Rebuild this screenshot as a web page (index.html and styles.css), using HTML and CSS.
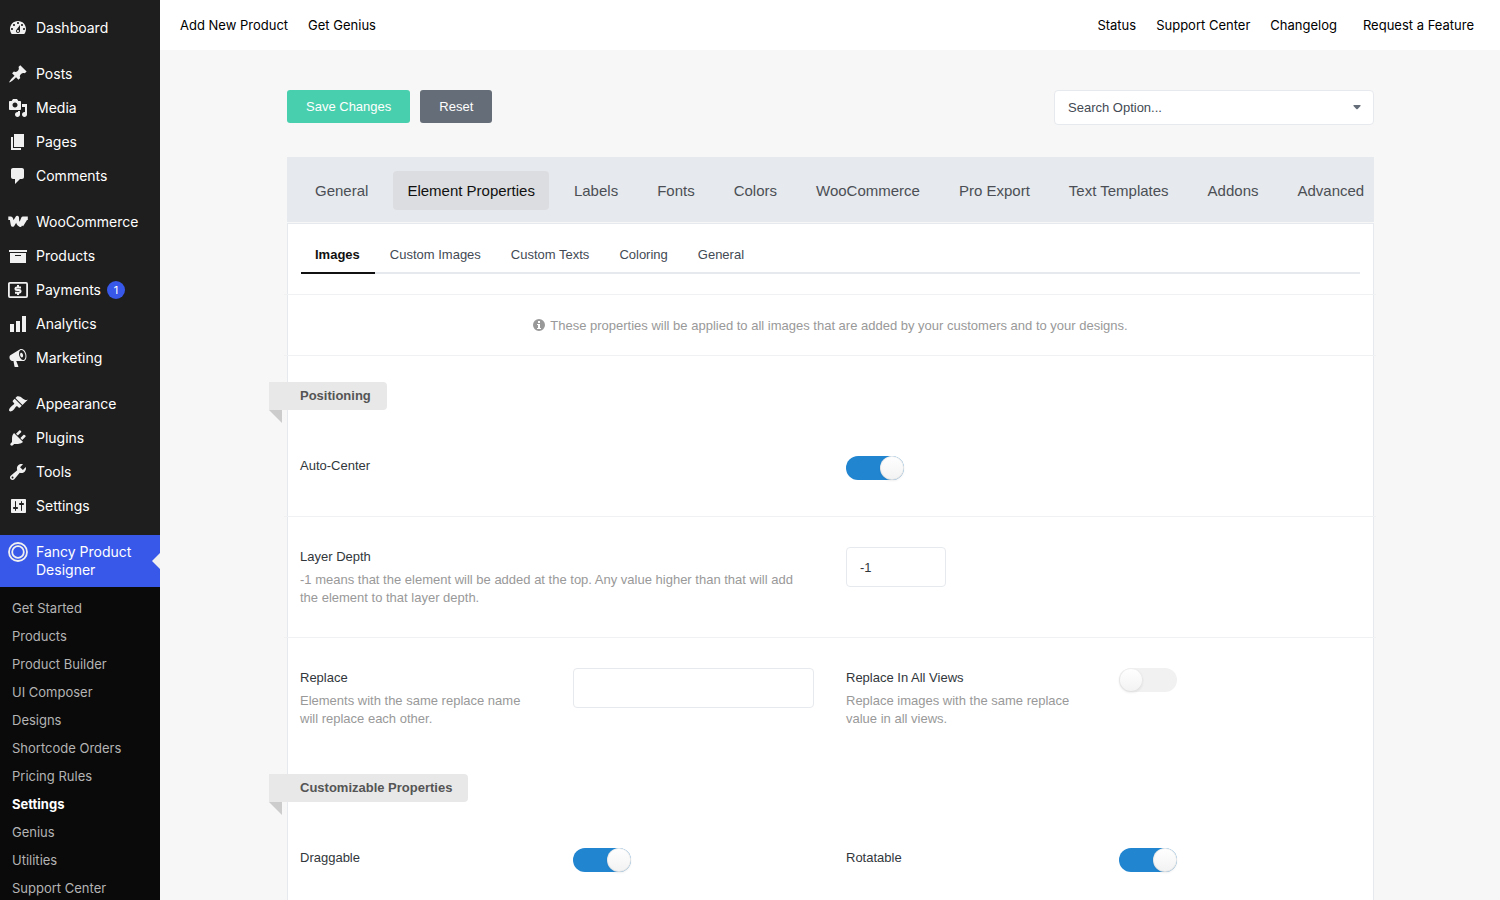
FILE: index.html
```html
<!DOCTYPE html>
<html lang="en">

<head>
    <meta charset="utf-8">
    <title>Fancy Product Designer - Settings</title>
    <link rel="stylesheet" href="styles.css">
</head>

<body>
    <div class="app">
        <nav class="sidebar" aria-label="Main menu">
            <ul class="menu">
                <li><a href="#"><svg viewBox="0 0 20 20"><path fill-rule="evenodd" d="M3.76 16h12.48c1.1-1.37 1.76-3.11 1.76-5 0-4.42-3.58-8-8-8s-8 3.58-8 8c0 1.89.66 3.63 1.76 5zM10 4c.55 0 1 .45 1 1s-.45 1-1 1-1-.45-1-1 .45-1 1-1zM6 6c.55 0 1 .45 1 1s-.45 1-1 1-1-.45-1-1 .45-1 1-1zm8 0c.55 0 1 .45 1 1s-.45 1-1 1-1-.45-1-1 .45-1 1-1zm-5.37 5.55L12 7v6c0 1.1-.9 2-2 2s-2-.9-2-2c0-.57.24-1.08.63-1.45zM4 10c.55 0 1 .45 1 1s-.45 1-1 1-1-.45-1-1 .45-1 1-1zm12 0c.55 0 1 .45 1 1s-.45 1-1 1-1-.45-1-1 .45-1 1-1zm-5 3c0-.55-.45-1-1-1s-1 .45-1 1 .45 1 1 1 1-.45 1-1z"/></svg>Dashboard</a></li>
                <li class="group-start"><a href="#"><svg viewBox="0 0 20 20"><path d="M10.44 3.02l1.82-1.82 6.36 6.35-1.83 1.82c-1.05-.68-2.48-.57-3.41.36l-.75.75c-.92.93-1.04 2.35-.35 3.41l-1.83 1.82-2.41-2.41-2.8 2.79c-.42.42-3.38 2.71-3.8 2.29s1.86-3.39 2.28-3.81l2.79-2.79L4.1 9.36l1.83-1.82c1.05.69 2.48.57 3.4-.36l.75-.75c.93-.92 1.05-2.35.36-3.41z"/></svg>Posts</a></li>
                <li><a href="#"><svg viewBox="0 0 20 20"><path fill-rule="evenodd" d="M13 11V4c0-.55-.45-1-1-1h-1.67L9 1H5L3.67 3H2c-.55 0-1 .45-1 1v7c0 .55.45 1 1 1h10c.55 0 1-.45 1-1zM7 4.5c1.38 0 2.5 1.12 2.5 2.5S8.38 9.5 7 9.5 4.5 8.38 4.5 7 5.62 4.5 7 4.5zM14 6h5v10.5c0 1.38-1.12 2.5-2.5 2.5S14 17.88 14 16.5s1.12-2.5 2.5-2.5c.17 0 .34.02.5.05V9h-3V6zm-4 8.05V13h2v3.5c0 1.38-1.12 2.5-2.5 2.5S7 17.88 7 16.5 8.12 14 9.5 14c.17 0 .34.02.5.05z"/></svg>Media</a></li>
                <li><a href="#"><svg viewBox="0 0 20 20"><path d="M6 15V2h10v13H6zm-1 1h8v2H3V5h2v11z"/></svg>Pages</a></li>
                <li><a href="#"><svg viewBox="0 0 20 20"><path d="M5 2h9c1.1 0 2 .9 2 2v7c0 1.1-.9 2-2 2h-2l-5 5v-5H5c-1.1 0-2-.9-2-2V4c0-1.1.9-2 2-2z"/></svg>Comments</a></li>
                <li class="group-start"><a href="#"><svg viewBox="0 0 20 20"><path class="stroke" stroke-width="3.6" stroke-linejoin="round" d="M.3 6.2H2.600C4 6.200 3.600 9 4.700 13L9.200 5.600C9.200 9 10 12.200 12.200 13.200L15 6.200H19.800M17.900 6.200L13.600 13.200"/></svg>WooCommerce</a></li>
                <li><a href="#"><svg viewBox="0 0 20 20"><path fill-rule="evenodd" d="M19 4v2H1V4h18zM2 7h16v10H2V7zm11 3V9H7v1h6z"/></svg>Products</a></li>
                <li><a href="#"><svg viewBox="0 0 20 20"><rect class="stroke" stroke-width="1.8" x=".9" y="2.9" width="18.2" height="14.2" rx="1"/><path class="stroke" stroke-width="2" d="M13 7.400H8.900c-2 0-2 2.600 0 2.600h2.200c2 0 2 2.700 0 2.700H7M10 5v1.600M10 13v2"/></svg>Payments<span class="badge">1</span></a></li>
                <li><a href="#"><svg viewBox="0 0 20 20"><path d="M18 18V2h-4v16h4zm-6 0V7H8v11h4zm-6 0v-8H2v8h4z"/></svg>Analytics</a></li>
                <li><a href="#"><svg viewBox="0 0 20 20"><path fill-rule="evenodd" d="M18.150 5.940c.46 1.620.38 3.220-.02 4.480-.42 1.280-1.260 2.180-2.300 2.480-.16.06-.26.06-.4.06-.06.02-.12.02-.18.02-.06.02-.14.02-.22.02h-6.800l2.220 5.500c.02.14-.06.26-.14.34-.08.1-.24.16-.34.16H6.950c-.1 0-.26-.06-.34-.16-.08-.08-.16-.2-.14-.34l-1-5.500H4.250l-.02-.02c-.5.06-1.080-.18-1.540-.62s-.88-1.080-1.060-1.880c-.24-.8-.2-1.560-.02-2.200.18-.62.58-1.080 1.060-1.300l.02-.02 9-5.400c.1-.06.18-.1.24-.16.06-.04.14-.08.24-.12.16-.08.28-.12.5-.18 1.040-.3 2.240.1 3.220.98s1.840 2.240 2.260 3.860zm-2.580 5.980h-.02c.4-.1.74-.34 1.040-.7.58-.7.86-1.760.86-3.040 0-.64-.1-1.300-.28-1.980-.34-1.360-1.020-2.500-1.780-3.240s-1.680-1.100-2.460-.88c-.82.22-1.400.96-1.700 2-.32 1.040-.28 2.360.06 3.720.38 1.360 1 2.500 1.800 3.240.78.74 1.620 1.100 2.480.88zm-2.540-7.080c.22-.04.42-.02.62.04.38.16.76.48 1.020 1s.42 1.200.42 1.780c0 .3-.04.56-.12.8-.18.48-.44.84-.86.94-.34.1-.8-.06-1.140-.4s-.64-.86-.78-1.500c-.18-.62-.12-1.240.02-1.720s.48-.84.82-.94z"/></svg>Marketing</a></li>
                <li class="group-start"><a href="#"><svg viewBox="0 0 20 20"><path d="M14.480 11.060L7.410 3.990l1.500-1.500c.5-.56 2.300-.47 3.510.32 1.210.8 1.430 1.280 2.910 2.100 1.180.64 2.450 1.260 4.450.85zm-.71.71L6.700 4.700 4.930 6.470c-.39.39-.39 1.020 0 1.410l1.060 1.060c.39.39.39 1.030 0 1.420-.6.6-1.430 1.110-2.210 1.690-.35.26-.7.53-1.010.84C1.430 14.230.4 16.080 1.400 17.070c.99 1 2.840-.03 4.180-1.360.31-.31.58-.66.85-1.020.57-.78 1.080-1.610 1.690-2.210.39-.39 1.020-.39 1.410 0l1.060 1.060c.39.39 1.020.39 1.410 0z"/></svg>Appearance</a></li>
                <li><a href="#"><svg viewBox="0 0 20 20"><path d="M13.110 4.360L9.870 7.600 8 5.730l3.240-3.240c.35-.34 1.050-.2 1.560.32.52.51.66 1.210.31 1.550zm-8 1.770l.91-1.120 9.010 9.010-1.190.84c-.71.71-2.630 1.160-3.820 1.160H6.140L4.900 17.260c-.59.59-1.540.59-2.120 0-.59-.58-.59-1.530 0-2.120l1.240-1.240v-3.880c0-1.130.4-3.190 1.090-3.890zm7.260 3.970l3.240-3.240c.34-.35 1.040-.21 1.550.31.52.51.66 1.210.31 1.550l-3.240 3.250z"/></svg>Plugins</a></li>
                <li><a href="#"><svg viewBox="0 0 20 20"><path fill-rule="evenodd" d="M16.680 9.770c-1.340 1.340-3.300 1.670-4.950.99l-5.410 6.520c-.99.99-2.590.99-3.580 0s-.99-2.590 0-3.570l6.520-5.420c-.68-1.650-.35-3.610.99-4.950 1.280-1.280 3.120-1.620 4.720-1.060l-2.890 2.890 2.820 2.820 2.860-2.870c.53 1.580.18 3.390-1.080 4.650zM3.810 16.210c.4.39 1.040.39 1.430 0 .4-.4.4-1.040 0-1.430-.39-.4-1.030-.4-1.430 0-.39.39-.39 1.030 0 1.430z"/></svg>Tools</a></li>
                <li><a href="#"><svg viewBox="0 0 20 20"><path fill-rule="evenodd" d="M18 16V4c0-.55-.45-1-1-1H4c-.55 0-1 .45-1 1v12c0 .55.45 1 1 1h13c.55 0 1-.45 1-1zM8 11h1c.55 0 1 .45 1 1s-.45 1-1 1H8v1.500c0 .28-.22.5-.5.5s-.5-.22-.5-.5V13H6c-.55 0-1-.45-1-1s.45-1 1-1h1V5.500c0-.28.22-.5.5-.5s.5.22.5.5V11zm5-2h-1c-.55 0-1-.45-1-1s.45-1 1-1h1V5.500c0-.28.22-.5.5-.5s.5.22.5.5V7h1c.55 0 1 .45 1 1s-.45 1-1 1h-1v5.500c0 .28-.22.5-.5.5s-.5-.22-.5-.5V9z"/></svg>Settings</a></li>
                <li class="group-start current"><a href="#"><svg viewBox="0 0 20 20"><circle class="stroke" stroke-width="1.8" cx="10" cy="10" r="9"/><circle class="stroke" stroke-width="1.8" cx="10" cy="10" r="5.8"/></svg>Fancy Product Designer</a></li>
            </ul>
            <ul class="submenu">
                <li><a href="#">Get Started</a></li>
                <li><a href="#">Products</a></li>
                <li><a href="#">Product Builder</a></li>
                <li><a href="#">UI Composer</a></li>
                <li><a href="#">Designs</a></li>
                <li><a href="#">Shortcode Orders</a></li>
                <li><a href="#">Pricing Rules</a></li>
                <li><a href="#" class="active">Settings</a></li>
                <li><a href="#">Genius</a></li>
                <li><a href="#">Utilities</a></li>
                <li><a href="#">Support Center</a></li>
            </ul>
        </nav>

        <div class="page">
            <header class="topbar">
                <a href="#">Add New Product</a>
                <a href="#">Get Genius</a>
                <a href="#" class="push">Status</a>
                <a href="#">Support Center</a>
                <a href="#">Changelog</a>
                <a href="#" class="request">Request a Feature</a>
            </header>

            <main class="content">
                <div class="actions">
                    <button type="button" class="btn btn-save">Save Changes</button>
                    <button type="button" class="btn btn-reset">Reset</button>
                    <div class="search">
                        <select aria-label="Search Option">
                            <option>Search Option...</option>
                        </select>
                        <svg class="caret" viewBox="0 0 8 5"><path d="M1 0h6q1 0 .5 1L4.700 4q-.7.600-1.400 0L.5 1Q0 0 1 0z"/></svg>
                    </div>
                </div>

                <nav class="tabs" aria-label="Settings">
                    <a href="#">General</a>
                    <a href="#" class="active">Element Properties</a>
                    <a href="#">Labels</a>
                    <a href="#">Fonts</a>
                    <a href="#">Colors</a>
                    <a href="#">WooCommerce</a>
                    <a href="#">Pro Export</a>
                    <a href="#">Text Templates</a>
                    <a href="#">Addons</a>
                    <a href="#">Advanced</a>
                </nav>

                <section class="panel">
                    <nav class="subtabs" aria-label="Element Properties">
                        <a href="#" class="active">Images</a>
                        <a href="#">Custom Images</a>
                        <a href="#">Custom Texts</a>
                        <a href="#">Coloring</a>
                        <a href="#">General</a>
                    </nav>

                    <p class="info">
                        <svg viewBox="0 0 14 14"><path fill-rule="evenodd" d="M7 1a6 6 0 1 0 0 12A6 6 0 0 0 7 1zM6 3h2v2H6zM5 6h3v4h1v1H5v-1h1V7H5z"/></svg>
                        These properties will be applied to all images that are added by your customers and to your designs.
                    </p>

                    <h2 class="ribbon">Positioning</h2>

                    <div class="row">
                        <div class="field wide">
                            <label for="auto-center">Auto-Center</label>
                        </div>
                        <div class="field">
                            <input type="checkbox" class="toggle" id="auto-center" checked>
                        </div>
                    </div>

                    <div class="row bordered">
                        <div class="field wide">
                            <label for="layer-depth">Layer Depth</label>
                            <p>-1 means that the element will be added at the top. Any value higher than that will add the element to that layer depth.</p>
                        </div>
                        <div class="field">
                            <input type="text" class="text short" id="layer-depth" value="-1">
                        </div>
                    </div>

                    <div class="row bordered">
                        <div class="field">
                            <label for="replace">Replace</label>
                            <p>Elements with the same replace name will replace each other.</p>
                        </div>
                        <div class="field">
                            <input type="text" class="text" id="replace">
                        </div>
                        <div class="field">
                            <label for="replace-all">Replace In All Views</label>
                            <p>Replace images with the same replace value in all views.</p>
                        </div>
                        <div class="field">
                            <input type="checkbox" class="toggle" id="replace-all">
                        </div>
                    </div>

                    <h2 class="ribbon">Customizable Properties</h2>

                    <div class="row">
                        <div class="field">
                            <label for="draggable">Draggable</label>
                        </div>
                        <div class="field">
                            <input type="checkbox" class="toggle" id="draggable" checked>
                        </div>
                        <div class="field">
                            <label for="rotatable">Rotatable</label>
                        </div>
                        <div class="field">
                            <input type="checkbox" class="toggle" id="rotatable" checked>
                        </div>
                    </div>
                </section>
            </main>
        </div>
    </div>
</body>

</html>
```
FILE: styles.css
```css
* {
    box-sizing: border-box;
}

body {
    margin: 0;
    background: #f7f7f7;
    font-family: "Liberation Sans", Arial, sans-serif;
    font-size: 13px;
    color: #32373c;
}

a {
    color: inherit;
    text-decoration: none;
}

.app {
    display: flex;
    height: 100vh;
    overflow: hidden;
}

/* Sidebar */
.sidebar {
    flex: none;
    width: 160px;
    background: #0a0a0a;
    font-family: Inter, sans-serif;
}

.sidebar ul {
    list-style: none;
    margin: 0;
    padding: 0;
}

.sidebar .menu {
    padding-top: 11px;
    background: #1e1e1e;
}

.menu a {
    display: flex;
    gap: 8px;
    padding: 8px;
    font-size: 14px;
    line-height: 18px;
    color: #fff;
}

.menu svg {
    flex: none;
    width: 20px;
    height: 20px;
    margin: -1px 0;
    fill: #f0f0f1;
}

.menu .stroke {
    fill: none;
    stroke: #f0f0f1;
}

.group-start {
    padding-top: 12px;
}

.badge {
    width: 18px;
    height: 18px;
    margin-left: -2px;
    border-radius: 50%;
    background: #3858e9;
    font-size: 11px;
    text-align: center;
}

.current a {
    position: relative;
    background: #3858e9;
}

.current a::after {
    content: "";
    position: absolute;
    top: 50%;
    right: 0;
    margin-top: -8px;
    border: 8px solid transparent;
    border-left: 0;
    border-right-color: #f0f0f1;
}

.sidebar .submenu {
    padding-top: 7px;
}

.submenu a {
    display: block;
    padding: 0 12px;
    line-height: 28px;
    color: #b4b4b4;
}

.submenu .active {
    color: #fff;
    font-weight: 700;
}

/* Top bar */
.page {
    flex: 1;
    min-width: 0;
}

.topbar {
    display: flex;
    align-items: center;
    gap: 20px;
    height: 50px;
    padding: 0 26px 0 20px;
    background: #fff;
    font-family: Inter, sans-serif;
    color: #000;
}

.push {
    margin-left: auto;
}

.request {
    margin-left: 6px;
}

/* Buttons and search */
.content {
    padding: 40px 126px 0 127px;
}

.actions {
    display: flex;
    gap: 10px;
    margin-bottom: 32px;
}

.btn {
    height: 33px;
    padding: 0 19px;
    border: 0;
    border-radius: 3px;
    font-family: inherit;
    font-size: 13px;
    color: #fff;
    cursor: pointer;
}

.btn-save {
    background: #48cfad;
}

.btn-reset {
    background: #656d78;
}

.search {
    position: relative;
    width: 320px;
    margin-left: auto;
}

.search select {
    display: block;
    width: 100%;
    height: 35px;
    padding: 0 13px;
    border: 1px solid #e6e9ed;
    border-radius: 4px;
    background: #fff;
    appearance: none;
    font-family: inherit;
    font-size: 13px;
    color: #434a54;
}

.caret {
    position: absolute;
    top: 15px;
    right: 13px;
    width: 8px;
    height: 5px;
    fill: #656d78;
    pointer-events: none;
}

/* Tabs */
.tabs {
    display: flex;
    gap: 11px;
    padding: 14px 14px 12px;
    background: #e6e9ed;
    font-size: 15px;
    line-height: 39px;
    white-space: nowrap;
    color: #4b4f55;
}

.tabs a {
    padding: 0 14px;
    border-radius: 4px;
}

.tabs .active {
    background: #dcdde0;
    color: #111;
}

.panel {
    min-height: 800px;
    margin-top: 1px;
    padding-top: 13px;
    border: 1px solid #e6e9ed;
    background: #fff;
}

.subtabs {
    display: flex;
    gap: 1px;
    margin: 0 13px 20px;
    box-shadow: inset 0 -2px #e6e9ed;
    line-height: 35px;
    color: #434a54;
}

.subtabs a {
    padding: 0 15px 2px 14px;
}

.subtabs .active {
    border-bottom: 2px solid #111;
    padding-bottom: 0;
    font-weight: 700;
    color: #111;
}

.info {
    display: flex;
    justify-content: center;
    gap: 4px;
    margin: 0 -3px 26px -4px;
    padding: 23px 0 21px;
    border: 1px solid #f0f1f2;
    border-width: 1px 0;
    line-height: 16px;
    color: #999;
}

.info svg {
    width: 14px;
    height: 14px;
    fill: #999;
}

/* Ribbon headings, folded behind the panel edge */
.ribbon {
    position: relative;
    width: fit-content;
    margin: 16px 0 16px -19px;
    padding: 0 16px 0 31px;
    border-radius: 0 4px 4px 0;
    background: #e8e8e8;
    font-size: 13px;
    line-height: 28px;
    color: #555;
}

.ribbon::after {
    content: "";
    position: absolute;
    top: 100%;
    left: 0;
    border-top: 13px solid #ccc;
    border-left: 13px solid transparent;
}

/* Option rows */
.row {
    display: grid;
    grid-template-columns: repeat(4, 1fr);
    margin: 0 -3px 0 -4px;
    padding: 30px 0;
}

.bordered {
    border-top: 1px solid #f0f1f2;
}

.field {
    min-height: 30px;
    padding: 0 16px;
}

.wide {
    grid-column: span 2;
}

.field label {
    display: block;
    line-height: 20px;
}

.field p {
    margin: 4px 0 0;
    line-height: 18px;
    color: #999;
}

.text {
    display: block;
    width: 100%;
    height: 40px;
    padding: 0 13px;
    border: 1px solid #e6e9ed;
    border-radius: 4px;
    font-family: inherit;
    font-size: 13px;
    color: #32373c;
}

.short {
    width: 100px;
}

.toggle {
    display: block;
    appearance: none;
    width: 58px;
    height: 24px;
    margin: 0;
    border-radius: 12px;
    background: #f1f1f1;
    cursor: pointer;
}

.toggle::before {
    content: "";
    display: block;
    width: 24px;
    height: 24px;
    border-radius: 50%;
    background: linear-gradient(#fff, #f2f2f2);
    box-shadow: 0 1px 2px rgba(34, 36, 38, 0.08), inset 0 0 0 1px rgba(34, 36, 38, 0.08);
}

.toggle:checked {
    background: #2185d0;
}

.toggle:checked::before {
    margin-left: 34px;
}
```
